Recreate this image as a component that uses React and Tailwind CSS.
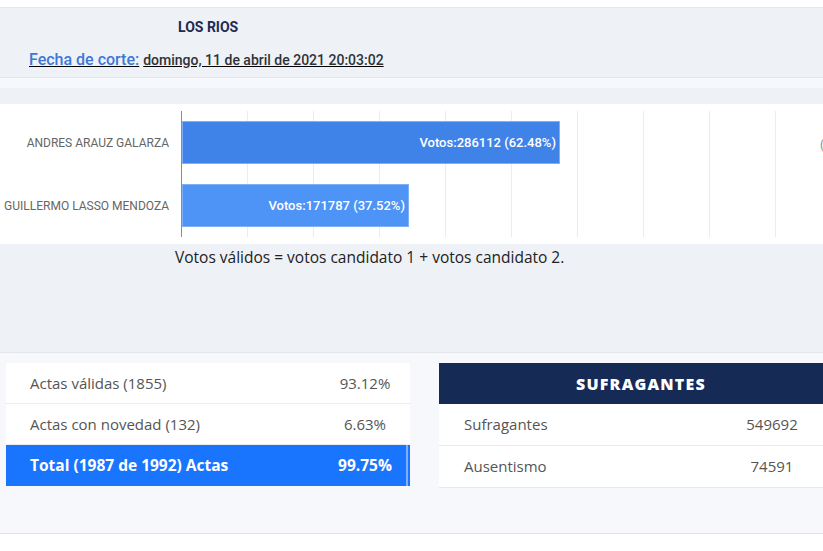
import React from 'react';

const candidates = [
  { name: 'ANDRES ARAUZ GALARZA', votes: 286112, pct: '62.48%', width: 378, color: 'bg-[#3f83e8]' },
  { name: 'GUILLERMO LASSO MENDOZA', votes: 171787, pct: '37.52%', width: 227, color: 'bg-[#4e93f6]' },
];

const gridLines = [66, 132, 198, 264, 330, 396, 462, 528, 594];

function Row({ label, value }) {
  return (
    <div className="flex items-center h-[41px] bg-white pl-6 text-[15px] text-[#555] border-b border-[#e9ecf0]">
      <span className="flex-1">{label}</span>
      <span className="w-[90px] text-center">{value}</span>
    </div>
  );
}

function StatRow({ label, value }) {
  return (
    <div className="flex items-center h-[42px] bg-white pl-[25px] text-[15px] text-[#555] border-b border-[#e6e9ed]">
      <span className="flex-1">{label}</span>
      <span className="w-[102px] text-center">{value}</span>
    </div>
  );
}

export default function App() {
  return (
    <div className="w-[823px] h-[551px] overflow-hidden bg-white font-['Roboto',sans-serif]">
      <div className="h-[8px] bg-white border-b border-[#e3e6ea]" />

      {/* header */}
      <div className="h-[70px] bg-[#eef1f6] border-b border-[#e3e6ea] pl-[29px]">
        <div className="pl-[149px] pt-[11px] text-[14px] font-bold text-[#1d2b4f] leading-[17px]">LOS RIOS</div>
        <div className="mt-[12px] flex items-baseline underline">
          <span className="text-[16px] font-medium text-[#3b78d9]">Fecha de corte:</span>
          <span className="ml-[4px] text-[14px] font-medium text-[#2e3338]">domingo, 11 de abril de 2021 20:03:02</span>
        </div>
      </div>
      <div className="h-[10px] bg-[#f7f8fb]" />
      <div className="h-[16px] bg-[#eef1f6]" />

      {/* chart */}
      <div className="h-[140px] bg-white flex pt-[7px] relative">
        <div className="w-[181px] flex flex-col pt-[10px] pr-[12px] text-[12px] text-[#666] text-right">
          {candidates.map((c, i) => (
            <div key={c.name} className={`h-[43px] flex items-center justify-end whitespace-nowrap ${i > 0 ? 'mt-[20px]' : ''}`}>{c.name}</div>
          ))}
        </div>
        <div className="relative flex-1 h-[126px] border-l border-[#8c8c8c]">
          {gridLines.map((x) => (
            <div key={x} className="absolute top-0 bottom-0 w-px bg-[#ececec]" style={{ left: x - 1 }} />
          ))}
          <div className="relative flex flex-col pt-[10px]">
            {candidates.map((c, i) => (
              <div
                key={c.name}
                className={`h-[43px] ${c.color} border border-[#7fb0f5] flex items-center justify-end pr-[3px] text-[13px] font-medium text-white ${i > 0 ? 'mt-[20px]' : ''}`}
                style={{ width: c.width }}
              >
                Votos:{c.votes} ({c.pct})
              </div>
            ))}
          </div>
        </div>
        <span className="absolute left-[820px] top-[32px] text-[12px] text-[#888]">(</span>
      </div>

      {/* caption */}
      <div className="h-[109px] bg-[#eef1f6] border-b border-[#e3e6ea] pl-[175px] pt-[2px] font-['Open_Sans',sans-serif] text-[15.5px] text-[#222]">
        Votos válidos = votos candidato 1 + votos candidato 2.
      </div>

      {/* tables */}
      <div className="h-[181px] bg-[#f7f8fb] border-b border-[#e0e3e8] pt-[10px] flex font-['Open_Sans',sans-serif]">
        <div className="ml-[6px] w-[404px]">
          <Row label="Actas válidas (1855)" value="93.12%" />
          <Row label="Actas con novedad (132)" value="6.63%" />
          <div className="relative flex items-center h-[41px] bg-[#1a75fe] pl-6 text-[15.5px] font-bold text-white">
            <span className="flex-1">Total (1987 de 1992) Actas</span>
            <span className="w-[90px] text-center">99.75%</span>
            <div className="absolute right-[2px] top-0 bottom-0 w-[2px] bg-[#7fb0ff]" />
          </div>
        </div>
        <div className="ml-[29px] flex-1">
          <div className="h-[41px] bg-[#162a56] flex items-center justify-center pl-[20px] text-[16px] font-extrabold tracking-[1.2px] text-white">SUFRAGANTES</div>
          <StatRow label="Sufragantes" value="549692" />
          <StatRow label="Ausentismo" value="74591" />
        </div>
      </div>
    </div>
  );
}
